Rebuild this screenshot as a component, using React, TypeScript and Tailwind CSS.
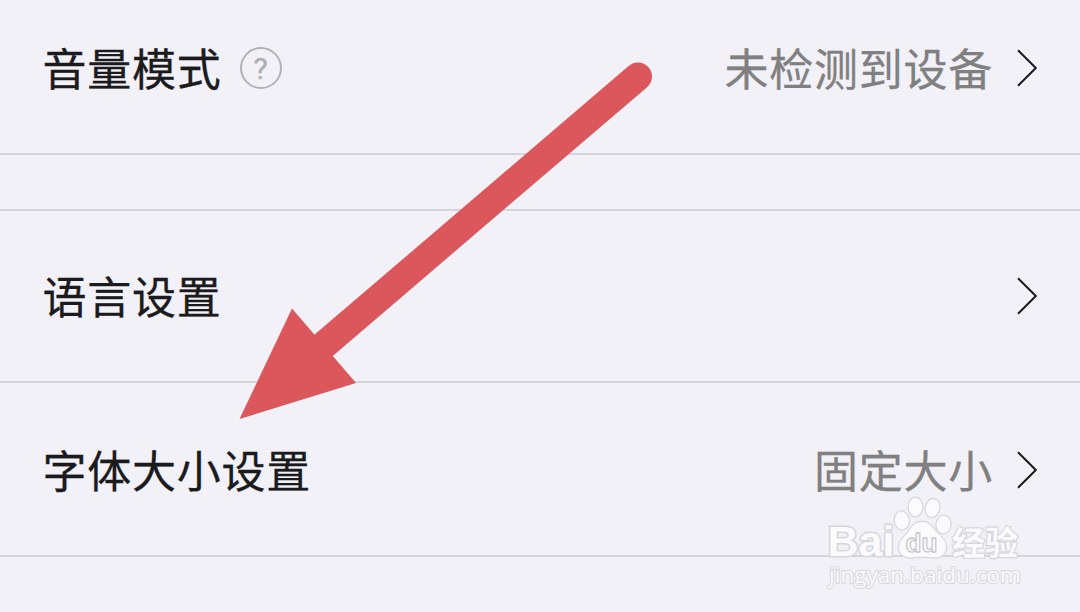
import type { ReactNode } from 'react'
import clsx from 'clsx'

interface RowProps {
  label: string
  value?: string
  hint?: ReactNode
  className: string
}

function Chevron() {
  return (
    <svg className="ml-[24px] h-10 w-[20px] shrink-0" viewBox="0 0 20 40" fill="none" stroke="#1b1b1d" strokeWidth="2">
      <path d="M1 2.2 18.8 20 1 37.8" />
    </svg>
  )
}

function HelpIcon() {
  return (
    <span className="ml-[18px] flex size-[42px] items-center justify-center rounded-full border-2 border-[#b3b3b5] text-[30px] leading-none tracking-normal text-[#aeaeb0]">
      <span className="mt-px font-[Roboto] [-webkit-text-stroke:0.4px_#aeaeb0]">?</span>
    </span>
  )
}

function SettingRow({ label, value, hint, className }: RowProps) {
  return (
    <div className={clsx('flex items-center border-b-2 border-[#d5d4da] pr-[43px] pl-[42.5px] text-[44px] leading-none tracking-[0.75px]', className)}>
      <span className="-mt-[3px] text-[#1b1b1d] [-webkit-text-stroke:0.3px_#1b1b1d]">{label}</span>
      {hint}
      <span className="-mt-[3px] ml-auto text-[#808080] [-webkit-text-stroke:0.3px_#808080]">{value}</span>
      <Chevron />
    </div>
  )
}

// Red pointer towards the font size row
function Arrow() {
  return (
    <svg className="absolute top-0 left-0 h-[612px] w-[1080px]" viewBox="0 0 1080 612">
      <path d="M638 76.5 300 365.5" stroke="#db575b" strokeWidth="28" strokeLinecap="round" />
      <path d="M239.5 419 292 308.5 356 383Z" fill="#db575b" />
    </svg>
  )
}

function Watermark() {
  return (
    <svg
      className="absolute top-[490px] left-[820px] h-[106px] w-[210px]"
      viewBox="820 490 210 106"
      fill="#fbfbfd"
      stroke="#d6d6da"
      strokeWidth="2.4"
      strokeLinejoin="round"
      paintOrder="stroke"
    >
      <text x="827.5" y="556" className="font-['Liberation_Sans'] text-[43px] font-bold" strokeWidth="3" textLength="67" lengthAdjust="spacingAndGlyphs">Bai</text>
      <g strokeWidth="2.4">
        <ellipse cx="901.8" cy="520.5" rx="7" ry="9" transform="rotate(-8 901.8 520.5)" />
        <ellipse cx="915.5" cy="507" rx="6.7" ry="9.3" />
        <ellipse cx="932.5" cy="508" rx="6.8" ry="9" transform="rotate(12 932.5 508)" />
        <ellipse cx="943.5" cy="524.5" rx="7" ry="8.8" transform="rotate(6 943.5 524.5)" />
        <path d="M922 522c-7 0-10 4-13.500 9.500-4 5.500-9.500 9-9.500 16 0 6.500 5 10 11 10 4.500 0 8-1 12.500-1s8 1 12.500 1c6.500 0 11-4 11-10.500 0-7-6-10.500-10-15.500-4.500-5.500-7-9.500-14-9.500Z" />
      </g>
      <text x="905.5" y="552" className="font-['Liberation_Sans'] text-[26px] font-bold" stroke="#c9c9cd" strokeWidth="1.3" paintOrder="normal" textLength="32" lengthAdjust="spacingAndGlyphs">du</text>
      <text x="952" y="554.5" className="font-['Noto_Sans_CJK_SC'] text-[33px] font-bold" textLength="66" lengthAdjust="spacingAndGlyphs">经验</text>
      <text x="829" y="583" className="font-['Open_Sans'] text-[22px] font-medium" strokeWidth="2" textLength="192" lengthAdjust="spacingAndGlyphs">jingyan.baidu.com</text>
    </svg>
  )
}

export default function App() {
  return (
    <div className="relative h-[612px] w-[1080px] overflow-hidden bg-[#f2f1f7] font-['Noto_Sans_CJK_SC',sans-serif]">
      <SettingRow className="h-[155px] pb-[17px]" label="音量模式" value="未检测到设备" hint={<HelpIcon />} />
      <div className="h-14 border-b-2 border-[#d5d4da]" />
      <SettingRow className="h-[172px]" label="语言设置" />
      <SettingRow className="h-[174px] pt-[2px]" label="字体大小设置" value="固定大小" />
      <Arrow />
      <Watermark />
    </div>
  )
}
